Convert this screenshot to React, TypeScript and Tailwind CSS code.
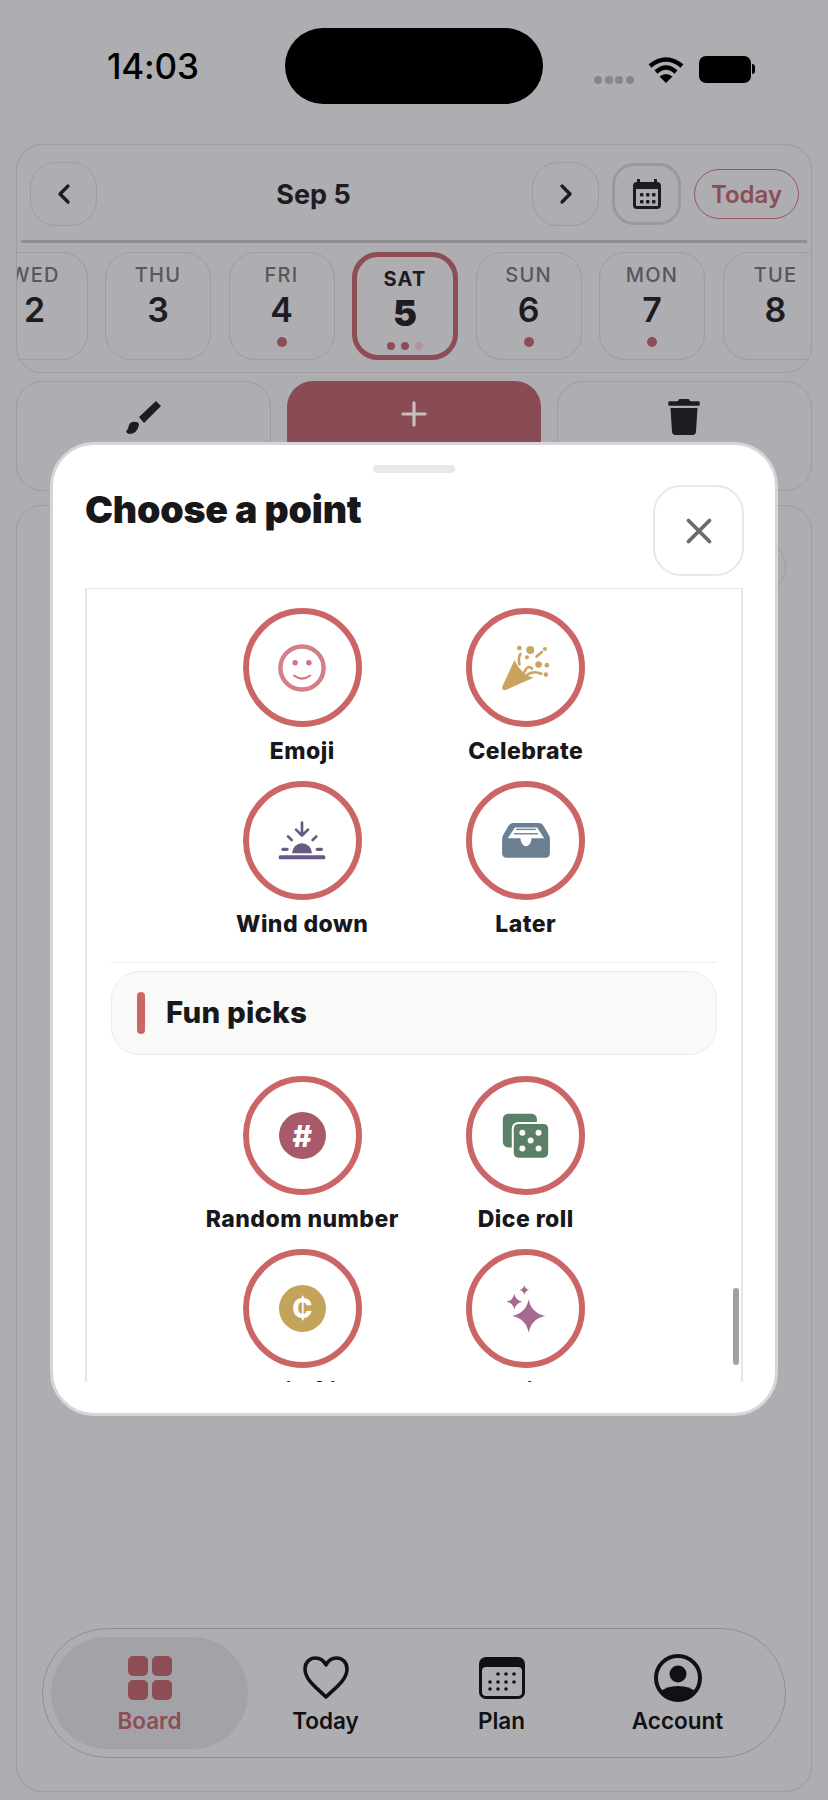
import React from "react";
import { ChevronLeft, ChevronRight, X, Plus } from "lucide-react";
import { FaTrash } from "react-icons/fa";

const F = { fontFamily: "Inter, 'Noto Sans', sans-serif" };

function Star({ cx, cy, r, k = 0.16 }: { cx: number; cy: number; r: number; k?: number }) {
  const a = r * k;
  return (
    <path
      d={`M${cx} ${cy - r}Q${cx + a} ${cy - a} ${cx + r} ${cy}Q${cx + a} ${cy + a} ${cx} ${cy + r}Q${cx - a} ${cy + a} ${cx - r} ${cy}Q${cx - a} ${cy - a} ${cx} ${cy - r}Z`}
    />
  );
}

const Smile = () => (
  <svg width="48" height="48" viewBox="238 165 140 140">
    <circle cx="308" cy="235" r="63" fill="none" stroke="#d47f88" strokeWidth="13" />
    <circle cx="288" cy="220" r="8" fill="#cf7480" />
    <circle cx="328" cy="220" r="8" fill="#cf7480" />
    <path d="M285 257Q308 275 332 257" fill="none" stroke="#cf7480" strokeWidth="6" strokeLinecap="round" />
  </svg>
);

const Party = () => (
  <svg width="50" height="47" viewBox="905 160 150 142" fill="#c9a45c" stroke="none">
    <path d="M909 288L945 208Q955 230 972 246Q988 260 1004 261L921 298Q904 303 909 288Z" />
    <g fill="none" stroke="#c9a45c" strokeWidth="8" strokeLinecap="round">
      <path d="M960 222Q956 200 963 190" />
      <path d="M975 245Q985 222 998 234" />
      <path d="M985 252Q1005 240 1026 250" />
      <path d="M1012 198L1028 184" />
    </g>
    <circle cx="993" cy="178" r="12" />
    <circle cx="960" cy="172" r="7" />
    <circle cx="1037" cy="175" r="6" />
    <circle cx="983" cy="200" r="6" />
    <circle cx="1018" cy="222" r="10" />
    <circle cx="1043" cy="224" r="7" />
    <circle cx="1040" cy="252" r="7" />
  </svg>
);

const WindDown = () => (
  <svg width="48" height="40" viewBox="236 690 144 120" fill="#675a85">
    <path d="M278 787a30 30 0 0 1 60 0Z" />
    <rect x="238" y="793" width="140" height="12" rx="5" />
    <rect x="246" y="770" width="22" height="10" rx="5" />
    <rect x="349" y="770" width="22" height="10" rx="5" />
    <g fill="none" stroke="#675a85" strokeWidth="8" strokeLinecap="round" strokeLinejoin="round">
      <path d="M308 695V732M290 716L308 734L326 716" />
      <path d="M266 736L277 747M351 736L340 747" />
    </g>
  </svg>
);

const Tray = () => (
  <svg width="48" height="35" viewBox="908 703 142 104" fill="#6a7f92">
    <path d="M940 703H1018Q1026 703 1031 711L1046 737Q1050 744 1050 750V792Q1050 806 1036 806H922Q908 806 908 792V750Q908 744 912 737L927 711Q932 703 940 703ZM946 716L925 748H962Q966 772 979 772Q992 772 996 748H1033L1012 716Z" fillRule="evenodd" />
    <rect x="950" y="720" width="58" height="4" fill="#6a7f92" />
    <rect x="943" y="733" width="72" height="4" fill="#6a7f92" />
  </svg>
);

const HashCoin = ({ bg, ch, size }: { bg: string; ch: string; size: string }) => (
  <div className={`w-[47px] h-[47px] rounded-full flex items-center justify-center text-white font-extrabold leading-none ${size} ${bg}`}>{ch}</div>
);

const Dice = () => (
  <svg width="47" height="45" viewBox="908 155 141 136">
    <rect x="910" y="157" width="103" height="102" rx="16" fill="#5b8068" />
    <rect x="937" y="182" width="115" height="113" rx="20" fill="#fff" />
    <rect x="943" y="188" width="104" height="102" rx="14" fill="#5b8068" />
    <g fill="#fff">
      <circle cx="969" cy="215" r="9" />
      <circle cx="1018" cy="215" r="9" />
      <circle cx="994" cy="238" r="9" />
      <circle cx="969" cy="262" r="9" />
      <circle cx="1018" cy="262" r="9" />
    </g>
  </svg>
);

const Sparkles = () => (
  <svg width="40" height="50" viewBox="918 672 120 150" fill="#a5698f">
    <Star cx={986} cy={768} r={50} />
    <Star cx={943} cy={725} r={24} />
    <Star cx={973} cy={690} r={15} />
  </svg>
);

function Pick({ label, children, gap = "mt-[9px]" }: { label: string; children?: React.ReactNode; gap?: string }) {
  return (
    <div className="h-[173px] flex flex-col items-center">
      <div className="w-[119px] h-[119px] shrink-0 rounded-full border-[6px] border-[#cc6666] flex items-center justify-center bg-white">
        {children}
      </div>
      <div className={`${gap} text-[23px] leading-[30px] font-extrabold text-[#18181b] tracking-[0.45px] whitespace-nowrap`}>{label}</div>
    </div>
  );
}

function Day({ d, n, dots = 0 }: { d: string; n: string; dots?: number }) {
  return (
    <div className="w-[106px] h-[108px] shrink-0 rounded-[26px] border border-[#9d9ca1] flex flex-col items-center pt-[9px]">
      <div className="text-[20px] leading-[26px] font-medium tracking-[1.2px] text-[#57575c]">{d}</div>
      <div className="mt-[1px] text-[34px] leading-[42px] font-semibold text-[#1c1c22]">{n}</div>
      {dots > 0 && <div className="w-[10px] h-[10px] rounded-full bg-[#8e4d55] mt-[6px]" />}
    </div>
  );
}

function NavItem({ label, children, active }: { label: string; children: React.ReactNode; active?: boolean }) {
  return (
    <div className="w-[175px] flex flex-col items-center">
      <div className="h-[48px] flex items-center justify-center">{children}</div>
      <div className={`mt-[5px] text-[22.500px] leading-[28px] font-semibold ${active ? "text-[#8e4d55]" : "text-[#111114]"}`}>{label}</div>
    </div>
  );
}

export default function App() {
  return (
    <div style={F} className="relative w-[828px] h-[1800px] overflow-hidden bg-[#aeadb2]">
      {/* status bar */}
      <div className="h-[144px] relative flex items-start px-[107px] pt-[45px]">
        <div className="text-[35px] leading-[42px] font-medium text-black tracking-[-0.2px]">14:03</div>
        <div className="absolute left-[285px] top-[28px] w-[258px] h-[76px] rounded-[38px] bg-black" />
        <div className="absolute left-[594px] top-[54px] flex items-center gap-[14px]">
          <div className="flex gap-[2.500px] mt-[22px]">
            {[0, 1, 2, 3].map((i) => (
              <div key={i} className="w-[8px] h-[8px] rounded-full bg-[#87868b]" />
            ))}
          </div>
          <svg width="36" height="27" viewBox="0 0 36 27" fill="none" stroke="#000" strokeWidth="4.5">
            <path d="M2 10Q18 -3 34 10" />
            <path d="M8 16Q18 7 28 16" />
            <path d="M18 27L11.500 20.500Q18 15.500 24.500 20.500Z" fill="#000" stroke="none" />
          </svg>
          <div className="flex items-center ml-[1px]">
            <div className="w-[52px] h-[27px] rounded-[7px] bg-black" />
            <div className="w-[3px] h-[10px] rounded-r-full bg-black ml-[1px]" />
          </div>
        </div>
      </div>

      {/* date card */}
      <div className="mx-[16px] h-[229px] rounded-[26px] border border-[#9d9ca1] overflow-hidden">
        <div className="h-[95px] flex items-start pt-[17px] pl-[13px]">
          <div className="w-[67px] h-[64px] rounded-[26px] border border-[#9d9ca1] flex items-center justify-center text-[#1c1c22]">
            <ChevronLeft size={32} strokeWidth={2.5} />
          </div>
          <div className="w-[435px] h-[64px] pr-[2px] pt-[2px] flex items-center justify-center text-[27px] font-bold text-[#1c1c22]">Sep 5</div>
          <div className="w-[67px] h-[64px] rounded-[26px] border border-[#9d9ca1] flex items-center justify-center text-[#1c1c22]">
            <ChevronRight size={32} strokeWidth={2.5} />
          </div>
          <div className="ml-[13px] w-[69px] h-[62px] mt-[1px] rounded-[22px] border-[3px] border-[#9a999e] flex items-center justify-center">
            <svg width="28" height="30" viewBox="0 0 28 30" fill="#1c1c22">
              <rect x="4" y="0" width="3" height="5" />
              <rect x="21" y="0" width="3" height="5" />
              <rect x="0" y="3" width="28" height="27" rx="4" />
              <rect x="3" y="10" width="22" height="17" fill="#aeadb2" />
              {[7, 13, 19].map((x) => [14, 21].map((y) => <rect key={`${x}${y}`} x={x} y={y} width="3.5" height="3.5" rx="1" />))}
            </svg>
          </div>
          <div className="ml-[13px] mt-[7px] w-[105px] h-[50px] pt-[1px] rounded-[25px] border border-[#94555c] flex items-center justify-center text-[24px] font-semibold text-[#8e4d55]">Today</div>
        </div>
        <div className="h-[3px] mx-[4px] bg-[#8f8e93]" />
        <div className="flex gap-[17.500px] ml-[-35.500px] mt-[9px] items-start">
          <Day d="WED" n="2" />
          <Day d="THU" n="3" />
          <Day d="FRI" n="4" dots={1} />
          <div className="w-[106px] h-[108px] shrink-0 rounded-[26px] border-[5px] border-[#8e4d55] flex flex-col items-center pt-[9px]">
            <div className="text-[20px] leading-[26px] font-bold tracking-[1.2px] text-[#1c1c22]">SAT</div>
            <div className="text-[36px] leading-[42px] font-black text-[#1c1c22]">5</div>
            <div className="flex gap-[6px] mt-[8px]">
              <div className="w-[8px] h-[8px] rounded-full bg-[#8e4d55]" />
              <div className="w-[8px] h-[8px] rounded-full bg-[#8e4d55]" />
              <div className="w-[8px] h-[8px] rounded-full bg-[#b2969c]" />
            </div>
          </div>
          <Day d="SUN" n="6" dots={1} />
          <Day d="MON" n="7" dots={1} />
          <Day d="TUE" n="8" />
        </div>
      </div>

      {/* actions */}
      <div className="mx-[16px] mt-[8px] flex gap-[16px] h-[110px]">
        <div className="flex-1 rounded-[26px] border border-[#9d9ca1] flex justify-center pt-[18px] text-[#1c1c22]">
          <svg width="37" height="35" viewBox="14 9 37 35" fill="#1c1c22">
            <path d="M45 10L50 15L33 32L28 26Z" />
            <path d="M28 34Q28 31 25 31Q20 30 18 34Q17 39 15 40Q15 42 18 43Q26 43 28 34Z" />
          </svg>
        </div>
        <div className="flex-1 rounded-[26px] bg-[#8a4c54] flex justify-center pt-[14px] text-[#c9bfc3]">
          <Plus size={38} strokeWidth={2} />
        </div>
        <div className="flex-1 rounded-[26px] border border-[#9d9ca1] flex justify-center pt-[17px] text-[#1c1c22]">
          <FaTrash size={36} />
        </div>
      </div>

      {/* lower card */}
      <div className="mx-[16px] mt-[14px] h-[1287px] rounded-[26px] border border-[#9d9ca1] flex flex-col justify-between pb-[33px] px-[25px]">
        <div className="self-end mt-[33px] w-[60px] h-[56px] rounded-full border border-[#9d9ca1]" />
        <div className="h-[130px] rounded-[65px] border border-[#8f8e93] flex items-center pl-[8px] pr-[5px] relative">
          <div className="absolute left-[8px] top-[8px] w-[197px] h-[112px] rounded-[56px] bg-[#a3a2a7]" />
          <div className="relative flex w-full justify-between items-center pl-[11px] pr-[15px] pt-[2px]">
            <NavItem label="Board" active>
              <div className="grid grid-cols-2 gap-[4px] w-[44px] h-[44px]">
                {[0, 1, 2, 3].map((i) => (
                  <div key={i} className="rounded-[5px] bg-[#8e4d55]" />
                ))}
              </div>
            </NavItem>
            <NavItem label="Today">
              <svg width="46" height="44" viewBox="0 0 46 44" fill="none" stroke="#111114" strokeWidth="3.5" strokeLinejoin="round">
                <path d="M23 41C14 32 2 24 2 13C2 6 7 2 12.500 2C17 2 21 5 23 9C25 5 29 2 33.500 2C39 2 44 6 44 13C44 24 32 32 23 41Z" />
              </svg>
            </NavItem>
            <NavItem label="Plan">
              <svg width="46" height="42" viewBox="0 0 46 42">
                <rect x="0" y="0" width="46" height="42" rx="7" fill="#111114" />
                <rect x="3" y="10" width="40" height="29" rx="4" fill="#aeadb2" />
                <g fill="#111114">
                  {[
                    [19, 17], [27, 17], [35, 17],
                    [11, 25], [19, 25], [27, 25], [35, 25],
                    [11, 32], [19, 32], [27, 32],
                  ].map(([x, y]) => (
                    <circle key={`${x}-${y}`} cx={x} cy={y} r="1.800" />
                  ))}
                </g>
              </svg>
            </NavItem>
            <NavItem label="Account">
              <svg width="48" height="48" viewBox="0 0 48 48">
                <circle cx="24" cy="24" r="22" fill="none" stroke="#111114" strokeWidth="4" />
                <circle cx="24" cy="20" r="8.500" fill="#111114" />
                <path d="M6 38Q12 32 24 32Q36 32 42 38Q35 47 24 47Q13 47 6 38Z" fill="#111114" />
              </svg>
            </NavItem>
          </div>
        </div>
      </div>

      {/* modal sheet */}
      <div className="absolute left-[50px] top-[442px] w-[728px] h-[974px] rounded-[44px] border-[3px] border-[#d6d6d8] bg-white flex flex-col px-[32px]">
        <div className="mt-[20px] self-center w-[82px] h-[8px] rounded-full bg-[#e8e8e8]" />
        <div className="mt-[12px] h-[90px] flex justify-between items-start">
          <div className="mt-[2px] text-[37.500px] leading-[46px] font-black text-[#18181b] tracking-[-0.2px]">Choose a point</div>
          <div className="w-[91px] h-[91px] -mr-[1px] rounded-[28px] border-[2px] border-[#e8e8e8] flex items-center justify-center text-[#6b6b6b]">
            <X size={42} strokeWidth={2.2} />
          </div>
        </div>
        <div className="relative mt-[13px] h-[794px] border-x-[2px] border-t border-[#e6e6e6] overflow-hidden">
          <div className="-mt-[156px]">
            <div className="mb-[2px] w-[447px] mx-auto grid grid-cols-2 justify-items-center">
              <Pick label="Today" />
              <Pick label="Calendar" />
            </div>
            <div className="w-[447px] mx-auto grid grid-cols-2 justify-items-center">
              <Pick label="Emoji"><Smile /></Pick>
              <Pick label="Celebrate"><Party /></Pick>
              <Pick label="Wind down"><WindDown /></Pick>
              <Pick label="Later"><Tray /></Pick>
            </div>
            <div className="mx-[24px] mt-[8px] border-t border-[#eeeeee]" />
            <div className="mx-[24px] mt-[8px] h-[84px] pb-[2px] rounded-[28px] border border-[#ececec] bg-[#f9f9f8] flex items-center pl-[25px]">
              <div className="mt-[2px] w-[8px] h-[42px] rounded-full bg-[#cc6666]" />
              <div className="ml-[21px] text-[29.500px] font-extrabold text-[#18181b] tracking-[0.2px]">Fun picks</div>
            </div>
            <div className="mt-[21px] w-[447px] mx-auto grid grid-cols-2 justify-items-center">
              <Pick label="Random number"><HashCoin bg="bg-[#a85a6a]" ch="#" size="text-[30px]" /></Pick>
              <Pick label="Dice roll"><Dice /></Pick>
              <Pick label="Coin flip" gap="mt-[8px]"><HashCoin bg="bg-[#c4a35a]" ch="₵" size="text-[27px]" /></Pick>
              <Pick label="Mix" gap="mt-[8px]"><Sparkles /></Pick>
            </div>
          </div>
          <div className="absolute right-[2px] top-[699px] w-[6px] h-[77px] rounded-full bg-[#a0a0a0]" />
        </div>
      </div>
    </div>
  );
}
